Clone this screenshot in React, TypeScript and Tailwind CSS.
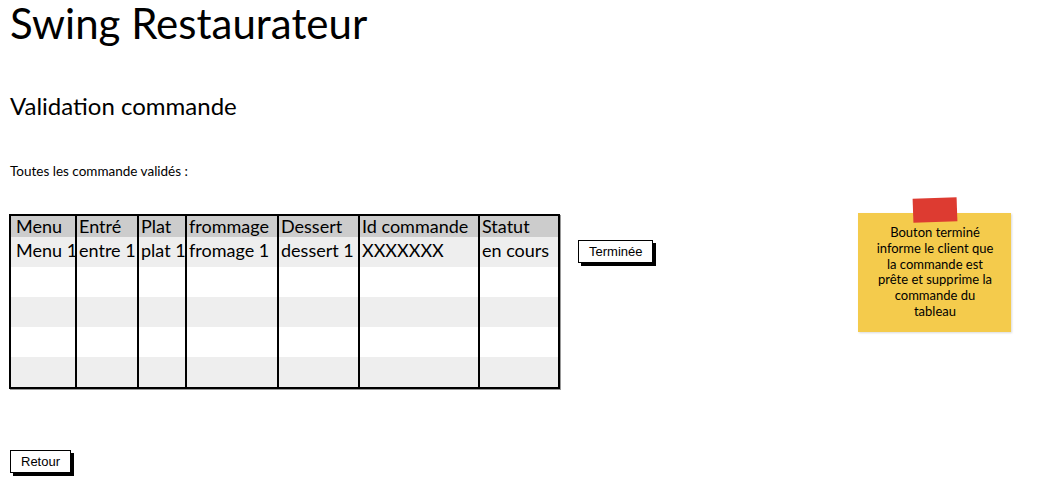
const columns = ["Menu", "Entré", "Plat", "frommage", "Dessert", "Id commande", "Statut"];

const rows: string[][] = [
  ["Menu 1", "entre 1", "plat 1", "fromage 1", "dessert 1", "XXXXXXX", "en cours"],
  ["", "", "", "", "", "", ""],
  ["", "", "", "", "", "", ""],
  ["", "", "", "", "", "", ""],
  ["", "", "", "", "", "", ""],
];

const widths = ["w-[66px]", "w-[62px]", "w-[48px]", "w-[92px]", "w-[81px]", "w-[120px]", "w-[78px]"];

function SketchButton({ label }: { label: string }) {
  return (
    <button className="border border-black bg-white px-[10px] h-[23px] text-[13px] leading-none text-black shadow-[3px_3px_0_#000] font-['Liberation_Sans',sans-serif]">
      {label}
    </button>
  );
}

function OrdersTable() {
  return (
    <div className="border-2 border-black w-[551px] shadow-[1px_1px_0_#999]">
      <div className="flex bg-[#cccccc] h-[21px]">
        {columns.map((c, i) => (
          <div
            key={c}
            className={`${widths[i]} ${i < 6 ? "border-r-2 border-black" : ""} ${i === 0 ? "pl-[5px]" : "pl-[2px]"} text-[18px] leading-[21px] whitespace-nowrap`}
          >
            {c}
          </div>
        ))}
      </div>
      {rows.map((r, ri) => (
        <div key={ri} className={`flex h-[30px] ${ri % 2 === 0 ? "bg-[#eeeeee]" : "bg-white"}`}>
          {r.map((cell, i) => (
            <div
              key={i}
              className={`${widths[i]} ${i < 6 ? "border-r-2 border-black" : ""} ${i === 0 ? "pl-[5px]" : "pl-[2px]"} text-[18px] leading-[27px] whitespace-nowrap`}
            >
              {cell}
            </div>
          ))}
        </div>
      ))}
    </div>
  );
}

function StickyNote() {
  return (
    <div className="relative w-[153px] h-[119px] bg-[#f4cb4c] shadow-[1px_1px_2px_rgba(0,0,0,0.15)] flex items-start justify-center pt-[12px]">
      <div className="absolute left-[55px] top-[-15px] w-[44px] h-[24px] bg-[#dd3b31] -rotate-2" />
      <p className="text-center text-[13px] leading-[15.8px] text-black">
        Bouton terminé
        <br />
        informe le client que
        <br />
        la commande est
        <br />
        prête et supprime la
        <br />
        commande du
        <br />
        tableau
      </p>
    </div>
  );
}

export default function App() {
  return (
    <div className="w-[1050px] h-[494px] bg-white text-black font-['Lato',sans-serif]">
      <h1 className="pl-[10px] text-[42px] leading-[46px]">Swing Restaurateur</h1>
      <h2 className="pl-[10px] mt-[46px] text-[24px] leading-[28px]">Validation commande</h2>
      <p className="pl-[10px] mt-[42px] text-[13.5px] leading-[18px]">Toutes les commande validés :</p>
      <div className="flex items-start pl-[9px] mt-[34px]">
        <OrdersTable />
        <div className="ml-[18px] mt-[24px]">
          <SketchButton label="Terminée" />
        </div>
        <div className="ml-[205px] mt-[-1px]">
          <StickyNote />
        </div>
      </div>
      <div className="pl-[10px] mt-[59px]">
        <SketchButton label="Retour" />
      </div>
    </div>
  );
}
